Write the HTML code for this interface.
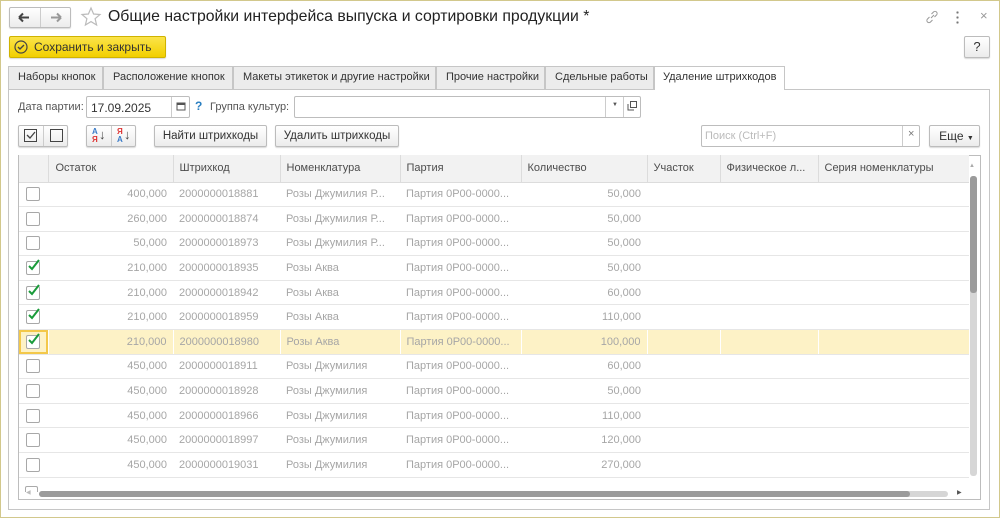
<!DOCTYPE html>
<html><head><meta charset="utf-8"><style>
*{box-sizing:border-box;margin:0;padding:0}
body{width:1000px;height:518px;overflow:hidden;background:#fff;font-family:"Liberation Sans",Arial,sans-serif;font-size:11px;color:#333;position:relative;white-space:nowrap}
.frame{position:absolute;left:0;top:0;width:1000px;height:518px;border:1px solid #d2c88c}
.abs{position:absolute}
.btn{position:absolute;border:1px solid #bcbcbc;border-radius:2px;background:linear-gradient(#fff,#ececec);box-shadow:0 1px 1px rgba(0,0,0,.15);text-align:center;color:#333}
.tab{position:absolute;top:66px;height:23px;border:1px solid #c6c6c6;border-bottom:none;background:#ececec;line-height:21px;padding-left:9px;color:#333}
.inp{position:absolute;border:1px solid #bdbdbd;border-radius:2px;background:#fff;height:22px}
table{position:absolute;left:19px;top:155px;border-collapse:collapse;table-layout:fixed;width:950px}
td,th{height:24.6px;border-bottom:1px solid #e6e6e6;white-space:nowrap;overflow:hidden;color:#a6a6a6;font-weight:normal;padding:0 6px}
th{height:27px;background:#f2f2f2;color:#4d4d4d;text-align:left;border-left:1px solid #dcdcdc;border-bottom:1px solid #dcdcdc}
th:first-child{border-left:none}
td.r{text-align:right}
tr.sel td{background:#fdf2c6;border-left:1px solid #fff}
tr.sel td:first-child{border-left:none}
.cb{display:block;width:14px;height:14px;border:1px solid #a8a8a8;border-radius:2px;background:#fff;position:relative;margin-left:1px}
.cb svg{position:absolute;left:0;top:-4px}
</style></head><body>
<div class="frame"></div>
<div class="btn" style="left:9px;top:7px;width:62px;height:21px"></div>
<div class="abs" style="left:40px;top:8px;width:1px;height:19px;background:#ccc"></div>
<svg class="abs" style="left:15px;top:11px" width="50" height="13"><path d="M4 6.5h10M4 6.5l4-4M4 6.5l4 4" stroke="#444" stroke-width="2" fill="none"/><path d="M46 6.5h-10M46 6.5l-4-4M46 6.5l-4 4" stroke="#999" stroke-width="2" fill="none"/></svg>
<svg class="abs" style="left:80px;top:6px" width="22" height="22"><path d="M11 2l2.6 6 6.4.5-4.9 4.2 1.5 6.3L11 15.6 5.4 19l1.5-6.3L2 8.5l6.4-.5z" fill="none" stroke="#bbb" stroke-width="1.2"/></svg>
<div class="abs" style="left:108px;top:8px;font-size:15.8px;color:#222">Общие настройки интерфейса выпуска и сортировки продукции *</div>
<svg class="abs" style="left:924px;top:9px" width="16" height="16"><path d="M7 9l3-3M5.5 8l-2 2a2.1 2.1 0 003 3l2-2M10.5 8l2-2a2.1 2.1 0 00-3-3l-2 2" stroke="#999" fill="none"/></svg>
<div class="abs" style="left:956px;top:10px;width:3px;height:14px;background:radial-gradient(circle,#777 1px,transparent 1.3px) 0 0/3px 5px"></div>
<div class="abs" style="left:980px;top:8px;color:#999;font-size:13px">×</div>
<div class="btn" style="left:9px;top:36px;width:157px;height:22px;background:linear-gradient(#fbe44a,#f2cf00);border-color:#cfb300;text-align:left;padding-left:24px;line-height:20px;font-size:12px;color:#333">Сохранить и закрыть</div>
<svg class="abs" style="left:14px;top:40px" width="14" height="14"><circle cx="7" cy="7" r="6" fill="none" stroke="#444" stroke-width="1.2"/><path d="M4 7l2 2 4-4" stroke="#444" stroke-width="1.4" fill="none"/></svg>
<div class="btn" style="left:964px;top:36px;width:26px;height:22px;line-height:20px;font-size:13px">?</div>
<div class="abs" style="left:8px;top:89px;width:982px;height:421px;border:1px solid #c6c6c6"></div>
<div class="tab" style="left:8px;width:95px">Наборы кнопок</div>
<div class="tab" style="left:103px;width:130px">Расположение кнопок</div>
<div class="tab" style="left:233px;width:203px">Макеты этикеток и другие настройки</div>
<div class="tab" style="left:436px;width:109px">Прочие настройки</div>
<div class="tab" style="left:545px;width:109px">Сдельные работы</div>
<div class="tab" style="left:654px;width:131px;background:#fff;height:24px;padding-left:8px">Удаление штрихкодов</div>
<div class="abs" style="left:18px;top:101px;color:#555">Дата партии:</div>
<div class="inp" style="left:86px;top:96px;width:104px;padding:4px 0 0 4px;color:#333;font-size:12px">17.09.2025</div>
<div class="abs" style="left:171px;top:97px;width:1px;height:20px;background:#ccc"></div>
<svg class="abs" style="left:176px;top:101px" width="10" height="10"><rect x="1" y="2" width="8" height="7" fill="none" stroke="#555"/><rect x="1" y="2" width="8" height="2" fill="#555"/></svg>
<div class="abs" style="left:195px;top:99px;color:#2a7fc1;font-weight:bold;font-size:12px">?</div>
<div class="abs" style="left:210px;top:101px;color:#555">Группа культур:</div>
<div class="inp" style="left:294px;top:96px;width:347px"></div>
<div class="abs" style="left:605px;top:97px;width:1px;height:20px;background:#ccc"></div>
<div class="abs" style="left:623px;top:97px;width:1px;height:20px;background:#ccc"></div>
<div class="abs" style="left:612px;top:102px;font-size:6px;color:#555">▼</div>
<svg class="abs" style="left:627px;top:101px" width="10" height="10"><rect x="3.5" y="0.5" width="6" height="6" fill="none" stroke="#555"/><path d="M1 3v6h6" stroke="#555" fill="none"/></svg>
<div class="btn" style="left:18px;top:125px;width:50px;height:22px"></div>
<div class="abs" style="left:43px;top:126px;width:1px;height:20px;background:#ccc"></div>
<svg class="abs" style="left:24px;top:129px" width="40" height="14"><rect x="0.5" y="0.5" width="12" height="12" fill="none" stroke="#444"/><path d="M3 6l3 3 5-6" stroke="#444" stroke-width="1.3" fill="none"/><rect x="26.5" y="0.5" width="12" height="12" fill="none" stroke="#444"/></svg>
<div class="btn" style="left:86px;top:125px;width:50px;height:22px"></div>
<div class="abs" style="left:111px;top:126px;width:1px;height:20px;background:#ccc"></div>
<div class="abs" style="left:92px;top:128px;font-size:8px;line-height:8px;font-weight:bold"><span style="color:#3a7bc8">A</span><br><span style="color:#d33">Я</span></div>
<div class="abs" style="left:117px;top:128px;font-size:8px;line-height:8px;font-weight:bold"><span style="color:#d33">Я</span><br><span style="color:#3a7bc8">A</span></div>
<div class="abs" style="left:99px;top:127px;font-size:13px;color:#444">↓</div>
<div class="abs" style="left:124px;top:127px;font-size:13px;color:#444">↓</div>
<div class="btn" style="left:154px;top:125px;width:113px;height:22px;line-height:20px;font-size:11.5px">Найти штрихкоды</div>
<div class="btn" style="left:275px;top:125px;width:124px;height:22px;line-height:20px;font-size:11.5px">Удалить штрихкоды</div>
<div class="inp" style="left:701px;top:125px;width:219px;padding:4px 0 0 3px;color:#bbb">Поиск (Ctrl+F)</div>
<div class="abs" style="left:902px;top:126px;width:1px;height:20px;background:#ccc"></div>
<div class="abs" style="left:908px;top:128px;color:#777;font-size:11px">×</div>
<div class="btn" style="left:929px;top:125px;width:51px;height:22px;line-height:20px;padding-left:4px;font-size:12px">Еще <span style="font-size:7px">▼</span></div>
<div class="abs" style="left:18px;top:155px;width:963px;height:345px;border:1px solid #bdbdbd"></div>
<table>
<colgroup><col style="width:29px"><col style="width:125px"><col style="width:107px"><col style="width:120px"><col style="width:121px"><col style="width:126px"><col style="width:73px"><col style="width:98px"><col style="width:151px"></colgroup>
<tr><th></th><th style="padding-left:7px">Остаток</th><th>Штрихкод</th><th>Номенклатура</th><th>Партия</th><th>Количество</th><th>Участок</th><th>Физическое л...</th><th>Серия номенклатуры</th></tr>
<tr><td><i class="cb"></i></td><td class="r">400,000</td><td>2000000018881</td><td>Розы Джумилия Р...</td><td>Партия 0Р00-0000...</td><td class="r">50,000</td><td></td><td></td><td></td></tr>
<tr><td><i class="cb"></i></td><td class="r">260,000</td><td>2000000018874</td><td>Розы Джумилия Р...</td><td>Партия 0Р00-0000...</td><td class="r">50,000</td><td></td><td></td><td></td></tr>
<tr><td><i class="cb"></i></td><td class="r">50,000</td><td>2000000018973</td><td>Розы Джумилия Р...</td><td>Партия 0Р00-0000...</td><td class="r">50,000</td><td></td><td></td><td></td></tr>
<tr><td><i class="cb"><svg width="14" height="14"><path d="M2 8l3 3 7-9" stroke="#1a9b3a" stroke-width="2" fill="none"/></svg></i></td><td class="r">210,000</td><td>2000000018935</td><td>Розы Аква</td><td>Партия 0Р00-0000...</td><td class="r">50,000</td><td></td><td></td><td></td></tr>
<tr><td><i class="cb"><svg width="14" height="14"><path d="M2 8l3 3 7-9" stroke="#1a9b3a" stroke-width="2" fill="none"/></svg></i></td><td class="r">210,000</td><td>2000000018942</td><td>Розы Аква</td><td>Партия 0Р00-0000...</td><td class="r">60,000</td><td></td><td></td><td></td></tr>
<tr><td><i class="cb"><svg width="14" height="14"><path d="M2 8l3 3 7-9" stroke="#1a9b3a" stroke-width="2" fill="none"/></svg></i></td><td class="r">210,000</td><td>2000000018959</td><td>Розы Аква</td><td>Партия 0Р00-0000...</td><td class="r">110,000</td><td></td><td></td><td></td></tr>
<tr class="sel"><td style="box-shadow:inset 0 0 0 2px #f3c84a"><i class="cb"><svg width="14" height="14"><path d="M2 8l3 3 7-9" stroke="#1a9b3a" stroke-width="2" fill="none"/></svg></i></td><td class="r">210,000</td><td>2000000018980</td><td>Розы Аква</td><td>Партия 0Р00-0000...</td><td class="r">100,000</td><td></td><td></td><td></td></tr>
<tr><td><i class="cb"></i></td><td class="r">450,000</td><td>2000000018911</td><td>Розы Джумилия</td><td>Партия 0Р00-0000...</td><td class="r">60,000</td><td></td><td></td><td></td></tr>
<tr><td><i class="cb"></i></td><td class="r">450,000</td><td>2000000018928</td><td>Розы Джумилия</td><td>Партия 0Р00-0000...</td><td class="r">50,000</td><td></td><td></td><td></td></tr>
<tr><td><i class="cb"></i></td><td class="r">450,000</td><td>2000000018966</td><td>Розы Джумилия</td><td>Партия 0Р00-0000...</td><td class="r">110,000</td><td></td><td></td><td></td></tr>
<tr><td><i class="cb"></i></td><td class="r">450,000</td><td>2000000018997</td><td>Розы Джумилия</td><td>Партия 0Р00-0000...</td><td class="r">120,000</td><td></td><td></td><td></td></tr>
<tr><td><i class="cb"></i></td><td class="r">450,000</td><td>2000000019031</td><td>Розы Джумилия</td><td>Партия 0Р00-0000...</td><td class="r">270,000</td><td></td><td></td><td></td></tr>
</table>
<div class="abs" style="left:19px;top:481px;width:950px;height:18px;background:#fff"></div>
<div class="abs" style="left:25px;top:486px;width:13px;height:6px;border:1px solid #aaa;border-bottom:none;border-radius:2px 2px 0 0"></div>
<div class="abs" style="left:969px;top:163px;width:8px;height:12px;color:#aaa;font-size:6px">▲</div>
<div class="abs" style="left:970px;top:176px;width:7px;height:300px;background:#d6d6d6;border-radius:3px"></div>
<div class="abs" style="left:970px;top:176px;width:7px;height:117px;background:#9b9b9b;border-radius:3px"></div>
<div class="abs" style="left:39px;top:491px;width:909px;height:6px;background:#d6d6d6;border-radius:3px"></div>
<div class="abs" style="left:39px;top:491px;width:871px;height:6px;background:#9b9b9b;border-radius:3px"></div>
<div class="abs" style="left:957px;top:489px;font-size:6px;color:#555">▶</div>
<div class="abs" style="left:26px;top:489px;font-size:6px;color:#bbb">◀</div>
</body></html>
